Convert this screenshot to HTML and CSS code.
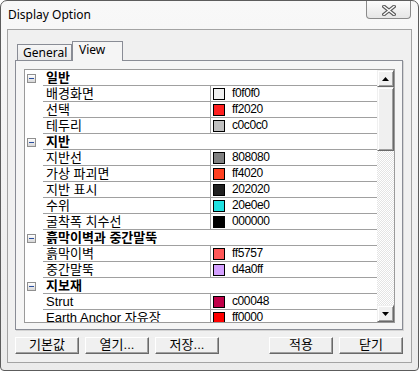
FILE: index.html
```html
<!DOCTYPE html>
<html lang="ko">
<head>
    <meta charset="UTF-8">
    <title>Display Option</title>
    <link rel="stylesheet" href="styles.css">
</head>
<body>

    <div class="window">
        <!-- Title bar -->
        <div class="titlebar">
            <span class="title">Display Option</span>
            <div class="close">
                <svg width="14" height="11" viewBox="0 0 14 11">
                    <path d="M2 1.5 L12 9.5 M12 1.5 L2 9.5" stroke="#5a5a5a" stroke-width="3.6" stroke-linecap="square"/>
                    <path d="M2 1.5 L12 9.5 M12 1.5 L2 9.5" stroke="#ffffff" stroke-width="1.4" stroke-linecap="square"/>
                </svg>
            </div>
        </div>

        <div class="client">
            <!-- Tabs -->
            <div class="tabs">
                <div class="tab">General</div>
                <div class="tab active">View</div>
            </div>

            <div class="panel">
                <div class="grid">
                    <div class="rows">
                        <div class="row cat">
                            <div class="indent"><span class="toggle"></span></div>
                            <div class="cells"><span class="name">일반</span></div>
                        </div>
                        <div class="row">
                            <div class="indent"></div>
                            <div class="cells"><span class="name">배경화면</span><span class="value"><i class="swatch" style="background:#f0f0f0"></i>f0f0f0</span></div>
                        </div>
                        <div class="row">
                            <div class="indent"></div>
                            <div class="cells"><span class="name">선택</span><span class="value"><i class="swatch" style="background:#ff2020"></i>ff2020</span></div>
                        </div>
                        <div class="row">
                            <div class="indent"></div>
                            <div class="cells"><span class="name">테두리</span><span class="value"><i class="swatch" style="background:#c0c0c0"></i>c0c0c0</span></div>
                        </div>
                        <div class="row cat">
                            <div class="indent"><span class="toggle"></span></div>
                            <div class="cells"><span class="name">지반</span></div>
                        </div>
                        <div class="row">
                            <div class="indent"></div>
                            <div class="cells"><span class="name">지반선</span><span class="value"><i class="swatch" style="background:#808080"></i>808080</span></div>
                        </div>
                        <div class="row">
                            <div class="indent"></div>
                            <div class="cells"><span class="name">가상 파괴면</span><span class="value"><i class="swatch" style="background:#ff4020"></i>ff4020</span></div>
                        </div>
                        <div class="row">
                            <div class="indent"></div>
                            <div class="cells"><span class="name">지반 표시</span><span class="value"><i class="swatch" style="background:#202020"></i>202020</span></div>
                        </div>
                        <div class="row">
                            <div class="indent"></div>
                            <div class="cells"><span class="name">수위</span><span class="value"><i class="swatch" style="background:#20e0e0"></i>20e0e0</span></div>
                        </div>
                        <div class="row">
                            <div class="indent"></div>
                            <div class="cells"><span class="name">굴착폭 치수선</span><span class="value"><i class="swatch" style="background:#000000"></i>000000</span></div>
                        </div>
                        <div class="row cat">
                            <div class="indent"><span class="toggle"></span></div>
                            <div class="cells"><span class="name">흙막이벽과 중간말뚝</span></div>
                        </div>
                        <div class="row">
                            <div class="indent"></div>
                            <div class="cells"><span class="name">흙막이벽</span><span class="value"><i class="swatch" style="background:#ff5757"></i>ff5757</span></div>
                        </div>
                        <div class="row">
                            <div class="indent"></div>
                            <div class="cells"><span class="name">중간말뚝</span><span class="value"><i class="swatch" style="background:#d4a0ff"></i>d4a0ff</span></div>
                        </div>
                        <div class="row cat">
                            <div class="indent"><span class="toggle"></span></div>
                            <div class="cells"><span class="name">지보재</span></div>
                        </div>
                        <div class="row">
                            <div class="indent"></div>
                            <div class="cells"><span class="name">Strut</span><span class="value"><i class="swatch" style="background:#c00048"></i>c00048</span></div>
                        </div>
                        <div class="row">
                            <div class="indent"></div>
                            <div class="cells"><span class="name">Earth Anchor 자유장</span><span class="value"><i class="swatch" style="background:#ff0000"></i>ff0000</span></div>
                        </div>
                    </div>

                    <!-- Scrollbar -->
                    <div class="scrollbar">
                        <div class="sb-btn">
                            <svg width="7" height="4" viewBox="0 0 7 4"><polygon points="3.5,0 7,4 0,4" fill="#000"/></svg>
                        </div>
                        <div class="sb-thumb"></div>
                        <div class="sb-track"></div>
                        <div class="sb-btn">
                            <svg width="7" height="4" viewBox="0 0 7 4"><polygon points="0,0 7,0 3.5,4" fill="#000"/></svg>
                        </div>
                    </div>
                </div>
            </div>

            <!-- Bottom buttons -->
            <div class="buttons">
                <div class="btn">기본값</div>
                <div class="btn">열기...</div>
                <div class="btn">저장...</div>
                <div class="btn push">적용</div>
                <div class="btn">닫기</div>
            </div>
        </div>
    </div>

</body>
</html>
```

FILE: styles.css
```css
* {
    box-sizing: border-box;
}

body {
    margin: 0;
    width: 419px;
    height: 373px;
    overflow: hidden;
    background-color: #ffffff;
    font-family: "Liberation Sans", "Noto Sans CJK KR", sans-serif;
    color: #000;
}

/* Window frame */
.window {
    width: 419px;
    height: 371px;
    border: 1px solid #5c5c5c;
    border-radius: 7px 7px 4px 4px;
    background: linear-gradient(#f8f8f8, #ebebeb);
    padding: 0 6px 7px 6px;
    display: flex;
    flex-direction: column;
}

.titlebar {
    height: 28px;
    display: flex;
    align-items: flex-start;
}

.title {
    font-family: "Noto Sans", sans-serif;
    font-size: 12px;
    line-height: 28px;
    padding-left: 1px;
}

.close {
    margin-left: auto;
    margin-right: 1px;
    width: 45px;
    height: 18px;
    border: 1px solid #8a8a8a;
    border-top: none;
    border-radius: 0 0 4px 4px;
    background: linear-gradient(#fbfbfb, #e6e6e6);
    display: flex;
    align-items: center;
    justify-content: center;
    padding-top: 1px;
}

/* Client area */
.client {
    flex: 1;
    border: 1px solid #a3a3a3;
    background-color: #f0f0f0;
    padding: 11px 8px 0 7px;
    display: flex;
    flex-direction: column;
}

.tabs {
    height: 20px;
    display: flex;
    align-items: flex-end;
    padding-left: 2px;
}

.tab {
    width: 55px;
    height: 17px;
    border: 1px solid #898c95;
    border-bottom: none;
    background: linear-gradient(#f6f6f6, #e7e7e7);
    font-family: "Noto Sans", sans-serif;
    font-size: 12px;
    line-height: 16px;
    padding-left: 5px;
}

.tab.active {
    position: relative;
    z-index: 2;
    width: 51px;
    height: 20px;
    background: #f5f5f5;
    padding-left: 6px;
    line-height: 16px;
}

.panel {
    position: relative;
    z-index: 1;
    margin-top: -1px;
    height: 270px;
    border: 1px solid #898c95;
    background-color: #f5f5f5;
    padding: 8px 7px 6px 8px;
    box-shadow: 1px 1px 0 #d4d4d4;
}

/* Property grid */
.grid {
    height: 254px;
    border: 1px solid #9a9a9a;
    background-color: #ffffff;
    display: flex;
}

.rows {
    flex: 1;
    overflow: hidden;
}

.row {
    display: flex;
    height: 16px;
}

.indent {
    width: 18px;
    flex: none;
}

.toggle {
    width: 9px;
    height: 9px;
    margin: 4px 0 0 2px;
    border: 1px solid #8f8f8f;
    background: linear-gradient(#ffffff, #d6d6d6);
    display: flex;
    align-items: center;
    justify-content: center;
}

.toggle::after {
    content: "";
    width: 5px;
    height: 1px;
    background-color: #2b4f9e;
}

.cells {
    flex: 1;
    display: flex;
    border-bottom: 1px solid #a0a0a0;
    font-size: 13px;
    line-height: 15px;
}

.name {
    width: 167px;
    flex: none;
    padding-left: 3px;
    white-space: nowrap;
    overflow: hidden;
}

.cat .name {
    width: auto;
    font-weight: bold;
}

.value {
    flex: 1;
    border-left: 1px solid #a0a0a0;
    display: flex;
    align-items: center;
    padding-left: 2px;
    font-size: 12px;
    letter-spacing: -0.4px;
}

.swatch {
    width: 12px;
    height: 12px;
    border: 1px solid #000;
    margin-right: 7px;
}

/* Classic scrollbar */
.scrollbar {
    width: 17px;
    flex: none;
    display: flex;
    flex-direction: column;
}

.sb-btn,
.sb-thumb {
    border: 1px solid;
    border-color: #f0f0f0 #696969 #696969 #f0f0f0;
    box-shadow: inset 1px 1px #ffffff, inset -1px -1px #a0a0a0;
    background-color: #f0f0f0;
}

.sb-btn {
    height: 17px;
    display: flex;
    align-items: center;
    justify-content: center;
}

.sb-btn svg {
    display: block;
}

.sb-thumb {
    height: 64px;
}

.sb-track {
    flex: 1;
    background: repeating-conic-gradient(#e4e4e4 0 25%, #ffffff 0 50%) 0 0 / 2px 2px;
}

/* Bottom buttons */
.buttons {
    display: flex;
    gap: 6px;
    margin-top: 7px;
}

.btn {
    width: 64px;
    height: 17px;
    border: 1px solid;
    border-color: #ffffff #696969 #696969 #ffffff;
    box-shadow: inset -1px -1px #a0a0a0;
    background-color: #f0f0f0;
    font-size: 13px;
    line-height: 14px;
    text-align: center;
}

.btn.push {
    margin-left: auto;
}
```
